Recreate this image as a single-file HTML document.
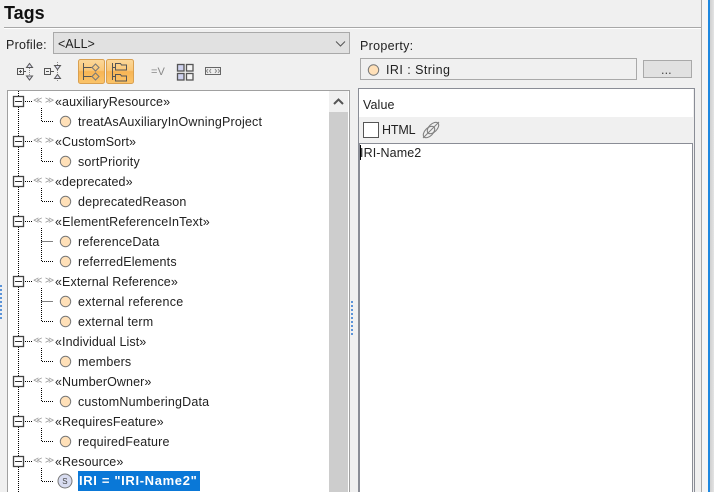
<!DOCTYPE html>
<html>
<head>
<meta charset="utf-8">
<style>
html,body{margin:0;padding:0;background:#f0f0f0;}
body{width:714px;height:492px;position:relative;overflow:hidden;font-family:"Liberation Sans",sans-serif;font-size:12.5px;color:#222;letter-spacing:.1px;}
.a{position:absolute;box-sizing:border-box;}
.t{position:absolute;white-space:nowrap;line-height:16px;}
.c{letter-spacing:.18px;}
.g{font-size:9px;color:#999;letter-spacing:0;}
</style>
</head>
<body>
<div class="a" style="left:701px;top:0;width:1px;height:492px;background:#a8a8a8"></div>
<div class="a" style="left:702px;top:0;width:6px;height:492px;background:#f6f6f6"></div>
<div class="a" style="left:708px;top:0;width:2px;height:492px;background:#1e88e0"></div>
<div class="a" style="left:710px;top:0;width:4px;height:492px;background:linear-gradient(90deg,#cfcfcf,#e4e4e4)"></div>

<div class="t" style="left:4px;top:3px;font-size:18px;font-weight:bold;line-height:20px;color:#111;letter-spacing:0">Tags</div>
<div class="a" style="left:4px;top:27px;width:697px;height:1px;background:#a8a8a8"></div>
<div class="a" style="left:4px;top:28px;width:697px;height:1px;background:#fff"></div>

<div class="t" style="left:6px;top:37px;letter-spacing:.25px">Profile:</div>
<div class="a" style="left:53px;top:32px;width:297px;height:22px;background:#e1e1e1;border:1px solid #a9a9a9"></div>
<div class="t" style="left:58px;top:36px;letter-spacing:0">&lt;ALL&gt;</div>
<svg class="a" style="left:335px;top:40px" width="12" height="8"><path d="M1 1.500L5.500 6L10 1.500" fill="none" stroke="#555" stroke-width="1"/></svg>

<!-- toolbar -->
<svg class="a" style="left:0;top:56px" width="240" height="32">
<defs><linearGradient id="o" x1="0" y1="0" x2="0" y2="1"><stop offset="0" stop-color="#fbd89a"/><stop offset=".45" stop-color="#fbc878"/><stop offset=".5" stop-color="#f8b555"/><stop offset="1" stop-color="#fbc46a"/></linearGradient></defs>
<g fill="none" stroke="#555" stroke-width="1">
<rect x="17.500" y="12.500" width="6" height="6" /><path d="M19 15.500h3M20.500 14v3M24 15.500h2"/>
<path d="M29.500 10v12" stroke="#888" stroke-dasharray="1 1"/>
<path d="M26.500 11.500l3-4 3 4z" fill="#dde" /><path d="M26.500 20l3 4 3-4z" fill="#dde"/>
<rect x="44.500" y="12.500" width="6" height="6"/><path d="M46 15.500h3M51 15.500h3"/>
<path d="M57.500 6v20" stroke="#888" stroke-dasharray="1 1"/>
<path d="M54.500 9.500l3 4 3-4z" fill="#dde"/><path d="M54.500 22.500l3-4 3 4z" fill="#dde"/>
</g>
<rect x="78.500" y="3.500" width="26" height="24" rx="2" fill="url(#o)" stroke="#d9a050"/>
<rect x="106.500" y="3.500" width="27" height="24" rx="2" fill="url(#o)" stroke="#d9a050"/>
<g fill="none" stroke="#555" stroke-width="1">
<path d="M83.500 7v17M83.500 11.500h8M83.500 20.500h8"/>
<path d="M95.500 8l3.500 3.500-3.500 3.500-3.500-3.500zM95.500 17l3.500 3.500-3.500 3.500-3.500-3.500z" stroke="#777"/>
<path d="M112.500 7v17M112.500 11.500h3M112.500 20.500h3"/>
<path d="M115.500 7.500h5l1 1.500h5v5h-11zM115.500 18.500h5l1 1.500h5v5h-11z"/>
<rect x="177.500" y="8.500" width="6.500" height="6.500" fill="#cfd2ee" stroke="#555" stroke-width="1.300"/>
<rect x="186.500" y="8.500" width="6.500" height="6.500" fill="#f4f4f4" stroke="#555" stroke-width="1.300"/>
<rect x="177.500" y="17.500" width="6.500" height="6.500" fill="#cfd2ee" stroke="#555" stroke-width="1.300"/>
<rect x="186.500" y="17.500" width="6.500" height="6.500" fill="#f4f4f4" stroke="#555" stroke-width="1.300"/>
<rect x="205.500" y="11.500" width="15" height="7" fill="#eee" stroke="#666"/>
<path d="M208 13l-1.500 2 1.500 2M211 13l-1.500 2 1.500 2M215 13l1.500 2-1.500 2M218 13l1.500 2-1.500 2" stroke="#888"/>
</g>
</svg>
<div class="t" style="left:151px;top:64px;font-size:11px;color:#888">=V</div>

<!-- tree -->
<div class="a" style="left:7px;top:90px;width:343px;height:402px;background:#fff;border:1px solid #a0a0a0;border-width:1px 1px 0 1px"></div>
<div class="a" style="left:329px;top:91px;width:19px;height:401px;background:#f0f0f0"></div>
<div class="a" style="left:329px;top:112px;width:19px;height:380px;background:#cdcdcd"></div>
<svg class="a" style="left:333px;top:97px" width="12" height="9"><path d="M1 7L5.500 2.500L10 7" fill="none" stroke="#555" stroke-width="2"/></svg>

<svg class="a" style="left:0;top:88px" width="80" height="404" font-family="Liberation Sans">
<path d="M18.500 3V404" stroke="#000" stroke-dasharray="1 1" fill="none"/>
<g fill="none" stroke="#000" stroke-dasharray="1 1">
<path d="M41.500 20V33.500H53"/>
<path d="M41.500 60V73.500H53"/>
<path d="M41.500 100V113.500H53"/>
<path d="M41.500 140V173.500H53M41.500 153.500H53"/>
<path d="M41.500 200V233.500H53M41.500 213.500H53"/>
<path d="M41.500 260V273.500H53"/>
<path d="M41.500 300V313.500H53"/>
<path d="M41.500 340V353.500H53"/>
<path d="M41.500 380V393.500H53"/>
</g>
<g fill="none" stroke="#000" stroke-dasharray="1 1">
<path d="M25 13.500H32M25 53.500H32M25 93.500H32M25 133.500H32M25 193.500H32M25 253.500H32M25 293.500H32M25 333.500H32M25 373.500H32"/>
</g>
<g fill="#fff" stroke="#444" stroke-width="1.300">
<rect x="13.500" y="8.500" width="10" height="10"/><rect x="13.500" y="48.500" width="10" height="10"/><rect x="13.500" y="88.500" width="10" height="10"/><rect x="13.500" y="128.500" width="10" height="10"/><rect x="13.500" y="188.500" width="10" height="10"/><rect x="13.500" y="248.500" width="10" height="10"/><rect x="13.500" y="288.500" width="10" height="10"/><rect x="13.500" y="328.500" width="10" height="10"/><rect x="13.500" y="368.500" width="10" height="10"/>
</g>
<path d="M15 13.500h7M15 53.500h7M15 93.500h7M15 133.500h7M15 193.500h7M15 253.500h7M15 293.500h7M15 333.500h7M15 373.500h7" stroke="#333"/>
<g fill="#ffe0b8" stroke="#777" stroke-width="1">
<circle cx="65.500" cy="33.500" r="5.200"/><circle cx="65.500" cy="73.500" r="5.200"/><circle cx="65.500" cy="113.500" r="5.200"/><circle cx="65.500" cy="153.500" r="5.200"/><circle cx="65.500" cy="173.500" r="5.200"/><circle cx="65.500" cy="213.500" r="5.200"/><circle cx="65.500" cy="233.500" r="5.200"/><circle cx="65.500" cy="273.500" r="5.200"/><circle cx="65.500" cy="313.500" r="5.200"/><circle cx="65.500" cy="353.500" r="5.200"/>
</g>
<circle cx="65" cy="393" r="7" fill="#d8dcf0" stroke="#777"/>
<text x="65" y="396" font-size="8" text-anchor="middle" fill="#444">S</text>
</svg>

<div class="t g" style="left:33px;top:92px">≪ ≫</div>
<div class="t g" style="left:33px;top:132px">≪ ≫</div>
<div class="t g" style="left:33px;top:172px">≪ ≫</div>
<div class="t g" style="left:33px;top:212px">≪ ≫</div>
<div class="t g" style="left:33px;top:272px">≪ ≫</div>
<div class="t g" style="left:33px;top:332px">≪ ≫</div>
<div class="t g" style="left:33px;top:372px">≪ ≫</div>
<div class="t g" style="left:33px;top:412px">≪ ≫</div>
<div class="t g" style="left:33px;top:452px">≪ ≫</div>

<div class="t" style="left:55px;top:94px">«auxiliaryResource»</div>
<div class="t c" style="left:78px;top:114px">treatAsAuxiliaryInOwningProject</div>
<div class="t" style="left:55px;top:134px">«CustomSort»</div>
<div class="t c" style="left:78px;top:154px">sortPriority</div>
<div class="t" style="left:55px;top:174px">«deprecated»</div>
<div class="t c" style="left:78px;top:194px">deprecatedReason</div>
<div class="t" style="left:55px;top:214px;letter-spacing:.17px">«ElementReferenceInText»</div>
<div class="t c" style="left:78px;top:234px">referenceData</div>
<div class="t c" style="left:78px;top:254px">referredElements</div>
<div class="t" style="left:55px;top:274px">«External Reference»</div>
<div class="t c" style="left:78px;top:294px;letter-spacing:.26px">external reference</div>
<div class="t c" style="left:78px;top:314px">external term</div>
<div class="t" style="left:55px;top:334px">«Individual List»</div>
<div class="t c" style="left:78px;top:354px">members</div>
<div class="t" style="left:55px;top:374px">«NumberOwner»</div>
<div class="t c" style="left:78px;top:394px">customNumberingData</div>
<div class="t" style="left:55px;top:414px">«RequiresFeature»</div>
<div class="t c" style="left:78px;top:434px">requiredFeature</div>
<div class="t" style="left:55px;top:454px">«Resource»</div>
<div class="a" style="left:78px;top:471px;width:122px;height:20px;background:#0a78d7"></div>
<div class="t" style="left:79px;top:473px;color:#fff;font-weight:bold;font-size:13px;letter-spacing:.65px">IRI = "IRI-Name2"</div>

<!-- splitter dots -->
<div class="a" style="left:351px;top:301px;width:2px;height:34px;background:repeating-linear-gradient(180deg,#5b93d8 0,#5b93d8 2px,transparent 2px,transparent 4px)"></div>
<div class="a" style="left:0;top:285px;width:2px;height:34px;background:repeating-linear-gradient(180deg,#5b93d8 0,#5b93d8 2px,transparent 2px,transparent 4px)"></div>

<!-- right panel -->
<div class="t" style="left:360px;top:38px;letter-spacing:.3px">Property:</div>
<div class="a" style="left:360px;top:58px;width:277px;height:22px;border:1px solid #a9a9a9"></div>
<svg class="a" style="left:366px;top:63px" width="14" height="14"><circle cx="7.500" cy="7" r="5.200" fill="#ffe0b8" stroke="#777"/></svg>
<div class="t" style="left:386px;top:62px;letter-spacing:.45px">IRI : String</div>
<div class="a" style="left:643px;top:60px;width:49px;height:18px;background:#e1e1e1;border:1px solid #a9a9a9"></div>
<div class="t" style="left:661px;top:62px;color:#444">...</div>

<div class="a" style="left:358px;top:88px;width:337px;height:404px;background:#f0f0f0;border:1px solid #8a8d96;border-bottom:0"></div>
<div class="a" style="left:359px;top:89px;width:334px;height:28px;background:#fff"></div>
<div class="t" style="left:363px;top:97px">Value</div>
<div class="a" style="left:363px;top:122px;width:16px;height:16px;background:#fff;border:1px solid #555"></div>
<div class="t" style="left:382px;top:122px;letter-spacing:-.15px">HTML</div>
<svg class="a" style="left:421px;top:120px" width="20" height="20"><g fill="none" stroke="#808080" stroke-width="1.100"><ellipse cx="8" cy="12" rx="7" ry="4" transform="rotate(-45 8 12)"/><ellipse cx="12" cy="8" rx="7" ry="4" transform="rotate(-45 12 8)"/><path d="M2 18L18 2" stroke-width="1"/></g></svg>
<div class="a" style="left:359px;top:143px;width:334px;height:349px;background:#fff;border:1px solid #8a8d96;border-bottom:0"></div>
<div class="a" style="left:360px;top:145px;width:1px;height:15px;background:#000"></div>
<div class="t" style="left:360px;top:145px">IRI-Name2</div>
</body>
</html>
